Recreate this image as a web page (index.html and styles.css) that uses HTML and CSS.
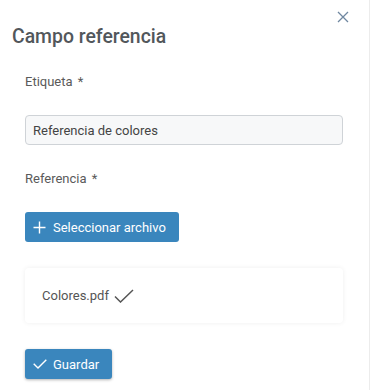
FILE: index.html
```html
<!DOCTYPE html>
<html>
  <head>
    <meta charset="UTF-8" />
    <title>Campo referencia</title>
    <link rel="stylesheet" href="styles.css">
  </head>
  <body>
    <div class="dialog">
      <button class="close" aria-label="Cerrar">
        <svg width="12" height="12" viewBox="0 0 12 12">
          <path d="M1 1L11 11M11 1L1 11" stroke="#6f87a0" stroke-width="1.3" fill="none" />
        </svg>
      </button>
      <h1>Campo referencia</h1>
      <form class="fields">
        <label for="etiqueta">Etiqueta <span class="req">*</span></label>
        <input type="text" id="etiqueta" value="Referencia de colores" />
        <label>Referencia <span class="req">*</span></label>
        <div>
          <button type="button" class="btn">
            <svg width="13" height="13" viewBox="0 0 13 13">
              <path d="M6.5 0.5V12.5M0.5 6.5H12.5" stroke="#fff" stroke-width="1.4" fill="none" />
            </svg>
            Seleccionar archivo
          </button>
        </div>
        <div class="file-card">
          <span>Colores.pdf</span>
          <svg width="20" height="14" viewBox="0 0 20 14">
            <path d="M1 7.5L6.5 13L19 1" stroke="#555" stroke-width="1.5" fill="none" />
          </svg>
        </div>
        <div>
          <button type="submit" class="btn btn-save">
            <svg width="14" height="10" viewBox="0 0 14 10">
              <path d="M0.7 4.8L5 9L13.3 0.7" stroke="#fff" stroke-width="1.4" fill="none" />
            </svg>
            Guardar
          </button>
        </div>
      </form>
    </div>
  </body>
</html>
```

FILE: styles.css
```css
body {
  margin: 0;
  font-family: Roboto, "Noto Sans", sans-serif;
  color: #555;
  background: #fff;
}
.dialog {
  position: relative;
  width: 370px;
  height: 390px;
  box-sizing: border-box;
  border-right: 1px solid #ececec;
  padding: 25px 0 0 12px;
}
.close {
  position: absolute;
  top: 11px;
  right: 20px;
  padding: 0;
  border: none;
  background: none;
  cursor: pointer;
}
h1 {
  margin: 0 0 25px;
  font-size: 19.4px;
  line-height: 24px;
  font-weight: 500;
  color: #52575b;
}
.fields {
  display: flex;
  flex-direction: column;
  gap: 26px;
  margin-left: 13px;
  width: 318px;
}
.fields label {
  font-size: 13px;
  line-height: 15px;
  color: #5a5a5a;
}
.req {
  margin-left: 2px;
}
.fields input[type="text"] {
  height: 30px;
  box-sizing: border-box;
  padding: 0 7px;
  font-family: inherit;
  font-size: 13px;
  color: #444;
  background: #f7f8f9;
  border: 1px solid #cfd3d7;
  border-radius: 4px;
}
.btn {
  display: inline-flex;
  align-items: center;
  gap: 7px;
  height: 30px;
  padding: 0 13px 0 8px;
  font-family: inherit;
  font-size: 13px;
  color: #fff;
  background: #3a86bd;
  border: none;
  border-radius: 3px;
  cursor: pointer;
}
.btn-save {
  gap: 6px;
  padding: 0 13px 0 8px;
  box-shadow: 0 1px 3px rgba(0, 0, 0, 0.3);
}
.file-card {
  display: flex;
  align-items: center;
  gap: 5px;
  height: 55px;
  padding-left: 17px;
  font-size: 13px;
  color: #555;
  background: #fff;
  border-radius: 4px;
  box-shadow: 0 0 5px rgba(0, 0, 0, 0.07);
}
```
